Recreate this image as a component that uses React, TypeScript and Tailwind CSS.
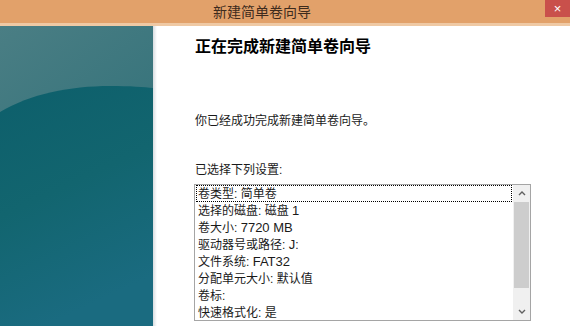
const settings = [
  "卷类型: 简单卷",
  "选择的磁盘: 磁盘 1",
  "卷大小: 7720 MB",
  "驱动器号或路径: J:",
  "文件系统: FAT32",
  "分配单元大小: 默认值",
  "卷标:",
  "快速格式化: 是",
];

const font = { fontFamily: '"Liberation Sans", "Noto Sans CJK SC", sans-serif' };

// Latin runs render a bit larger than the CJK text, like Segoe UI next to YaHei
function Mixed({ text }: { text: string }) {
  const parts = text.split(/([A-Za-z0-9]+(?: [A-Za-z0-9]+)*)/);
  return (
    <span>
      {parts.map((p, i) =>
        i % 2 === 1 ? (
          <span key={i} className="text-[13px]">
            {p}
          </span>
        ) : (
          p
        )
      )}
    </span>
  );
}

function SidePanel() {
  return (
    <svg width="153" height="300" viewBox="0 0 153 300" className="block shrink-0">
      <defs>
        <linearGradient id="top" x1="0" y1="0" x2="0.4" y2="1">
          <stop offset="0" stopColor="#4a7e84" />
          <stop offset="1" stopColor="#2a6d76" />
        </linearGradient>
        <linearGradient id="wave" x1="0" y1="0" x2="0.3" y2="1">
          <stop offset="0" stopColor="#0d5f6b" />
          <stop offset="0.5" stopColor="#12656f" />
          <stop offset="1" stopColor="#1a6b80" />
        </linearGradient>
      </defs>
      <rect width="153" height="300" fill="url(#top)" />
      <path d="M0 86 C 30 68, 70 60, 110 60 C 130 60, 145 61, 153 62 L153 300 L0 300 Z" fill="url(#wave)" />
    </svg>
  );
}

function ScrollBar() {
  return (
    <div className="flex w-[17px] shrink-0 flex-col bg-[#f0f0f0]">
      <div className="flex h-[17px] items-center justify-center">
        <svg width="8" height="5" viewBox="0 0 8 5">
          <path d="M1 4 L4 1 L7 4" fill="none" stroke="#606060" strokeWidth="1.4" />
        </svg>
      </div>
      <div className="mx-px h-[86px] bg-[#cdcdcd]" />
      <div className="flex-1" />
      <div className="flex h-[17px] items-center justify-center">
        <svg width="8" height="5" viewBox="0 0 8 5">
          <path d="M1 1 L4 4 L7 1" fill="none" stroke="#606060" strokeWidth="1.4" />
        </svg>
      </div>
    </div>
  );
}

export default function App() {
  return (
    <div className="flex h-[326px] w-[570px] flex-col overflow-hidden bg-white" style={font}>
      <div className="relative flex h-[23px] shrink-0 items-center bg-[#e2a16a] pl-[213px]">
        <span className="text-[14px] leading-none text-[#3e2b1d]">新建简单卷向导</span>
        <div className="absolute right-0 top-0 flex h-[17px] w-[25px] items-center justify-center bg-[#c9504b] text-[13px] leading-none text-white">
          ×
        </div>
      </div>
      <div className="h-[3px] shrink-0 bg-[#efc9a4]" />

      <div className="flex flex-1">
        <SidePanel />
        <div className="w-[4px] shrink-0 bg-gradient-to-r from-[#d8dde0] to-white" />
        <div className="flex flex-1 flex-col pl-[37px]">
          <h1 className="mt-[11px] pl-px text-[16px] font-bold leading-[20px] text-black">
            正在完成新建简单卷向导
          </h1>
          <p className="mt-[56px] pl-px text-[12px] leading-[16px] text-[#1a1a1a]">
            你已经成功完成新建简单卷向导。
          </p>
          <p className="mt-[33px] pl-px text-[12px] leading-[16px] text-[#1a1a1a]">
            已选择下列设置:
          </p>
          <div className="mt-[6px] flex h-[137px] w-[337px] border border-[#a5a5a5]">
            <ul className="flex-1 overflow-hidden">
              {settings.map((s, i) => (
                <li
                  key={s}
                  className={
                    "ml-px mr-px flex h-[17px] items-center whitespace-nowrap pl-px text-[12px] leading-none text-[#1a1a1a] " +
                    (i === 0 ? "border border-dotted border-black" : "border border-transparent")
                  }
                >
                  <Mixed text={s} />
                </li>
              ))}
            </ul>
            <ScrollBar />
          </div>
        </div>
      </div>
    </div>
  );
}
